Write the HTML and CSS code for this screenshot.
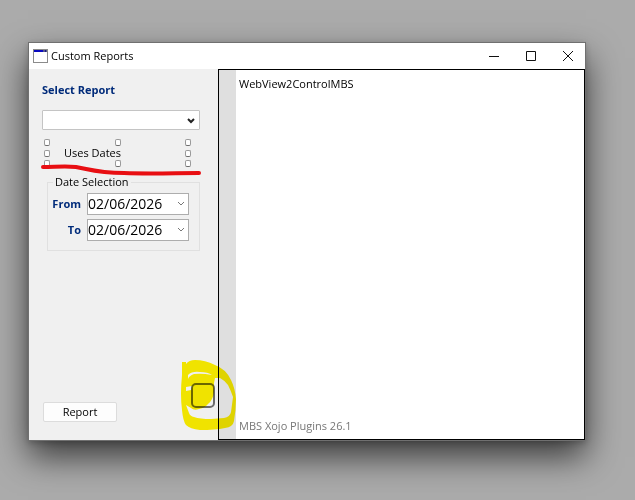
FILE: index.html
```html
<!DOCTYPE html>
<html lang="en">
<head>
  <meta charset="UTF-8" />
  <meta name="viewport" content="width=device-width, initial-scale=1.0"/>
  <title>Custom Reports</title>
  <link rel="stylesheet" href="styles.css">
</head>
<body>
  <main class="window">
    <header class="titlebar">
      <svg class="app-icon" width="15" height="14" viewBox="0 0 15 14" aria-hidden="true">
        <rect x="0.5" y="0.5" width="14" height="13" fill="#fff" stroke="#8b8b8b"/>
        <rect x="1" y="1" width="9" height="2" fill="#0a0ac0"/>
        <rect x="10" y="1" width="4" height="2" fill="#55558c"/>
        <path d="M12.500 1v2" stroke="#1a1a80"/>
      </svg>
      <h1>Custom Reports</h1>
      <div class="window-buttons">
        <button type="button" aria-label="Minimize">
          <svg width="12" height="12" viewBox="0 0 12 12"><path d="M1 6.500h10"/></svg>
        </button>
        <button type="button" aria-label="Maximize">
          <svg width="12" height="12" viewBox="0 0 12 12"><path d="M1.500 1.500h9v9h-9z"/></svg>
        </button>
        <button type="button" aria-label="Close">
          <svg width="12" height="12" viewBox="0 0 12 12"><path d="M1 1l10 10M11 1L1 11"/></svg>
        </button>
      </div>
    </header>

    <div class="content">
      <form class="sidebar">
        <label class="heading" for="report">Select Report</label>
        <div class="select-wrap">
          <select id="report">
            <option></option>
          </select>
          <svg class="chevron" width="8" height="6" viewBox="0 0 8 6"><path d="M1 1l3 3 3-3"/></svg>
        </div>

        <div class="selected">
          <span>Uses Dates</span>
          <div class="handles">
            <i></i><i></i><i></i>
            <i></i><b></b><i></i>
            <i></i><i></i><i></i>
          </div>
          <svg class="underline" width="162" height="14" viewBox="0 0 162 14">
            <path d="M3 4C14 4 26 3 36 4C48 6 58 10 84 10C110 11 136 10 159 10"/>
          </svg>
        </div>

        <fieldset>
          <legend>Date Selection</legend>
          <div class="date-row">
            <label for="from">From</label>
            <div class="date">
              <input type="text" id="from" value="02/06/2026" />
              <button type="button" aria-label="Open from calendar">
                <svg class="chevron" width="8" height="6" viewBox="0 0 8 6"><path d="M1 1l3 3 3-3"/></svg>
              </button>
            </div>
          </div>
          <div class="date-row">
            <label for="to">To</label>
            <div class="date">
              <input type="text" id="to" value="02/06/2026" />
              <button type="button" aria-label="Open to calendar">
                <svg class="chevron" width="8" height="6" viewBox="0 0 8 6"><path d="M1 1l3 3 3-3"/></svg>
              </button>
            </div>
          </div>
        </fieldset>

        <div class="actions">
          <button type="button" class="report-btn">Report</button>
          <div class="marked">
            <button type="button" class="square" aria-label="Container"></button>
            <svg class="marker" width="58" height="72" viewBox="0 0 58 72">
              <path d="M2 3L6 3L6 5Q9 1 15 1Q25 1 35 6Q46 10 51 21Q55 29 56 40Q56 51 54 62Q53 68 45 69Q35 71 20 71Q10 70 6 66Q3 62 2 51Q0 36 2 16Z
                M35 19L40 19Q44 21 48 26Q51 32 53 38L51 53Q50 58 44 59L31 60Q20 60 14 58Q10 57 9 54L6 46L11 49Q14 52 19 50Q25 49 28 45Q33 41 34 33L34 24Z
                M8 16Q12 12 20 13Q28 13 32 16Q22 14 14 15Q9 17 8 20Z
                M6 28L12 27L11 31L6 32Z"/>
            </svg>
          </div>
        </div>
      </form>

      <section class="webview">
        <div class="gutter"></div>
        <div class="webview-body">
          <p>WebView2ControlMBS</p>
          <p class="version">MBS Xojo Plugins 26.1</p>
        </div>
      </section>
    </div>
  </main>
</body>
</html>
```

FILE: styles.css
```css
* {
  box-sizing: border-box;
}
body {
  margin: 0;
  padding: 42px 49px 59px 28px;
  min-height: 100vh;
  display: flex;
  background: #ababab;
  color: #000;
  font-family: 'Open Sans', 'Noto Sans', sans-serif;
  font-size: 11px;
  line-height: 16px;
}
button, input, select {
  font: inherit;
  color: inherit;
  margin: 0;
  padding: 0;
}
h1, p {
  margin: 0;
  font-size: 11px;
  font-weight: 400;
}
svg {
  display: block;
  fill: none;
}
.window {
  flex: 1;
  display: flex;
  flex-direction: column;
  border: 1px solid #707070;
  background: #fff;
  box-shadow: 0 16px 32px rgba(0, 0, 0, 0.65), 0 2px 6px rgba(0, 0, 0, 0.2);
}
.titlebar {
  display: flex;
  align-items: center;
  height: 26px;
  padding-left: 4px;
  gap: 3px;
}
.window-buttons {
  display: flex;
  margin-left: auto;
}
.window-buttons button {
  display: flex;
  align-items: center;
  justify-content: center;
  width: 37px;
  height: 26px;
  padding-left: 2px;
  border: none;
  background: none;
}
.window-buttons path {
  stroke: #111;
}
.content {
  flex: 1;
  display: flex;
}
.sidebar {
  width: 189px;
  display: flex;
  flex-direction: column;
  padding: 13px 3px 18px 13px;
  background: #f0f0f0;
}
.heading, .date-row label {
  color: #002b7a;
  font-weight: 700;
}
.select-wrap {
  position: relative;
  margin: 12px 15px 0 0;
}
.select-wrap select {
  display: block;
  width: 100%;
  height: 20px;
  appearance: none;
  border: 1px solid #c4c4c4;
  border-radius: 1px;
  background: #fff;
}
.chevron path {
  stroke: #222;
}
.select-wrap .chevron {
  position: absolute;
  right: 5px;
  top: 8px;
  pointer-events: none;
}
.select-wrap .chevron path {
  stroke-width: 2;
}
.selected {
  position: relative;
  height: 28px;
  margin: 9px 24px 0 2px;
  padding: 6px 20px;
}
.handles {
  position: absolute;
  inset: 0;
  display: grid;
  grid-template-columns: repeat(3, 6px);
  justify-content: space-between;
  align-content: space-between;
}
.handles i {
  height: 7px;
  border: 1px solid #9a9a9a;
  border-bottom-color: #6e6e6e;
  border-radius: 2px;
  background: #fff;
}
.underline {
  position: absolute;
  left: -4px;
  top: 24px;
}
.underline path {
  stroke: #e80e12;
  stroke-width: 4;
  stroke-linecap: round;
}
fieldset {
  min-width: 0;
  margin: 7px 15px 0 5px;
  padding: 3px 10px 9px 4px;
  border: 1px solid #e0e0e0;
}
legend {
  margin-left: 1px;
  padding: 0 2px;
}
.date-row {
  display: flex;
  align-items: center;
  justify-content: flex-end;
  gap: 6px;
}
.date-row + .date-row {
  margin-top: 4px;
}
.date {
  display: flex;
  width: 102px;
  height: 22px;
  border: 1px solid #adadad;
  background: #fff;
}
.date input {
  flex: 1;
  min-width: 0;
  border: none;
  background: none;
  font-size: 14px;
}
.date button {
  display: flex;
  align-items: center;
  justify-content: center;
  width: 14px;
  border: none;
  background: none;
}
.date .chevron path {
  stroke: #777;
}
.actions {
  display: flex;
  justify-content: space-between;
  align-items: flex-end;
  margin-top: auto;
}
.report-btn {
  width: 74px;
  height: 20px;
  margin-left: 1px;
  border: 1px solid #dcdcdc;
  border-radius: 2px;
  background: #fdfdfd;
}
.marked {
  position: relative;
  margin-bottom: 14px;
}
.square {
  display: block;
  width: 24px;
  height: 25px;
  border: 2px solid #6b6b6b;
  border-radius: 5px;
  background: #f0f0f0;
}
.marker {
  position: absolute;
  left: -11px;
  top: -24px;
  z-index: 1;
  mix-blend-mode: multiply;
  pointer-events: none;
}
.marker path {
  fill: #fff200;
  fill-rule: evenodd;
}
.webview {
  flex: 1;
  display: flex;
  border: 1px solid #000;
  background: #fff;
}
.gutter {
  width: 17px;
  background: #dfdfdf;
}
.webview-body {
  flex: 1;
  display: flex;
  flex-direction: column;
  justify-content: space-between;
  padding: 6px 3px 5px;
}
.version {
  color: #777;
}
```
